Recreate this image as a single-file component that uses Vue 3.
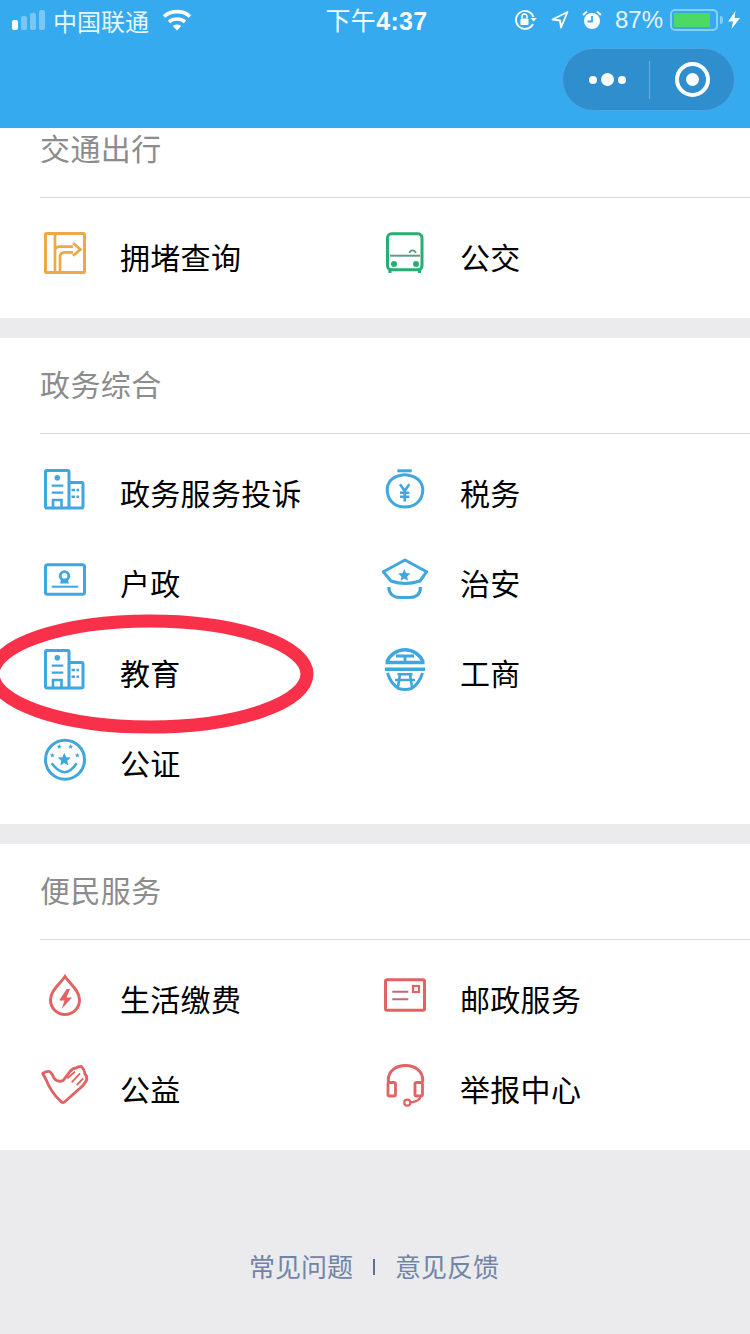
<script setup>
const star = (cx, cy, r) => {
  let pts = [];
  for (let i = 0; i < 10; i++) {
    const rad = i % 2 ? r * 0.45 : r;
    const a = (Math.PI / 5) * i - Math.PI / 2;
    pts.push((cx + rad * Math.cos(a)).toFixed(1) + ',' + (cy + rad * Math.sin(a)).toFixed(1));
  }
  return `<polygon points="${pts.join(' ')}" fill="currentColor" stroke="none"/>`;
};

const building = `
  <path d="M29 40 V3 a1.5 1.5 0 0 0 -1.5 -1.5 H7 A1.5 1.5 0 0 0 5.500 3 V37.500 A1.500 1.500 0 0 0 7 39 H41.500 A1.500 1.500 0 0 0 43 37.500 V15 A1.500 1.500 0 0 0 41.500 13.500 H29"/>
  <circle cx="17.300" cy="8.700" r="2.800" fill="currentColor" stroke="none"/>
  <path d="M11.700 16.700 H23.300 M11.700 23.700 H23.300" stroke-width="2.200"/>
  <path d="M13 39 V31 H21.500 V39" stroke-width="2.600"/>
  <path d="M31.500 21 H39 M31.500 27.700 H39" stroke-width="2.400" stroke-dasharray="3.500 1.500"/>`;

const icons = {
  road: `
    <rect x="5.500" y="0.500" width="39" height="39" rx="1"/>
    <path d="M15 0.500 V40 M15 16 C16 14.500 17.500 13.700 20 13.700 H33 M20 40 V24 C20 21 22 19.300 25 19.300 H33" stroke-width="2.700"/>
    <path d="M33 10 L40.500 16.400 L33 22.800" stroke-width="2.700"/>`,
  bus: `
    <rect x="7.500" y="0.800" width="34.500" height="36" rx="4"/>
    <path d="M10 37 V40 M39.500 37 V40" stroke-width="3"/>
    <path d="M10 22.700 H40" stroke="#5f9c88" stroke-width="2"/>
    <path d="M29.500 20 C30.500 16.500 34.500 16.500 35.800 20" stroke="#5f9c88" stroke-width="1.800"/>
    <circle cx="14" cy="31" r="3" fill="currentColor" stroke="none"/>
    <circle cx="36" cy="31" r="3" fill="currentColor" stroke="none"/>`,
  building,
  id: `
    <rect x="5.500" y="5.800" width="39" height="29.500" rx="2"/>
    <path d="M11.700 27.700 H38.300" stroke-width="2"/>
    <circle cx="24.500" cy="17" r="4.300" stroke-width="2.800"/>
    <path d="M20 24.500 H29 L27.500 19.500 H21.500 Z" fill="currentColor" stroke="none"/>`,
  tax: `
    <path d="M17.300 1.800 H31.700" stroke-width="3"/>
    <path d="M20 6.500 C10 8.500 6 16 7.500 24 C9 33 16 38 24.800 38 C34 38 41 33 42.500 24 C44 16 39.500 8.500 29.500 6.500 Q25 5 20 6.500 Z"/>
    <path d="M20 15.300 L24.700 22 L29.300 15.300 M24.700 22 V32.500 M20 23.700 H29.300 M20 27.800 H29.300" stroke-width="2.600"/>`,
  cap: `
    <path d="M3.300 12.700 L25 1 L46.700 12.700 L40 22 Q25 27 11 22 Z" stroke-linejoin="round"/>
    <path d="M8.800 28 C9 36 15 38.500 20 38.500 H30 C35 38.500 40.500 36 40.500 28" stroke-width="3.200"/>
    ${star(24.300, 16.500, 6.500)}`,
  gov: `
    <path d="M7 12.700 A19.500 19.500 0 0 1 43 12.700" stroke-width="3.400"/>
    <path d="M16 7 H34 M25 7 V13" stroke-width="2.800"/>
    <path d="M5.500 13.500 H44.500 M5 20.300 H45" stroke-width="3.400"/>
    <path d="M7.500 24 C9.500 30.500 13 36 18.500 39.500 Q25 41.500 31.500 39.500 C37 36 40.500 30.500 42.500 24" stroke-width="3"/>
    <path d="M17.500 25.300 H32.500 M15 31 H35 M20 25.300 L18 38 M30 25.300 L32 38" stroke-width="2.600"/>`,
  badge: `
    <circle cx="25" cy="20.700" r="19.500"/>
    <path d="M11.700 24.300 Q25 42 36.700 24.300" stroke-width="2.500"/>
    ${star(24.300, 20.800, 7)}
    ${star(19.300, 7.700, 2.600)}
    ${star(30.700, 7.700, 2.600)}
    ${star(12.300, 16.300, 2.600)}
    ${star(37.300, 16.300, 2.600)}`,
  drop: `
    <path d="M25 1.500 C20 9 10.500 15.500 10.500 25 A14.500 14.500 0 0 0 39.500 25 C39.500 15.500 30 9 25 1.500 Z"/>
    <polygon points="26.700,14 19,25.500 24.500,25.500 21.700,34 32,22.500 26.500,22.500 30,14" fill="currentColor" stroke="none"/>`,
  hands: `
    <path d="M2.700 8.500 Q7 5.500 10 6.700 Q12.500 9 14 13 Q17 17.500 23 15.700 L30 6.500 Q33 3 36 3 Q39 1 41.700 1.700 Q44.500 4.500 45 9 Q47.500 12 46.700 15 Q44 20 40 23.300 L24.500 37 Q22.500 38.500 20 35.500 Q15 31 12 26 Q8 20 6.500 15.500 Z" stroke-linejoin="round" stroke-width="2.800"/>
    <path d="M27.300 13.300 L35 6.700 M31.700 17.300 L40 8.300 M36.700 20 L43.300 13.300" stroke-width="1.800"/>`,
  mail: `
    <rect x="5.500" y="4.800" width="39" height="30.500" rx="1.500"/>
    <path d="M12.300 16.700 H28.300 M12.300 24.300 H28.300" stroke="#b5706f" stroke-width="2"/>
    <rect x="33" y="11" width="6" height="6" stroke-width="2.200"/>`,
  headset: `
    <path d="M8.300 17 V15 C8.300 6 16 0.500 25.500 0.500 C35 0.500 42.700 6 42.700 15 V17"/>
    <rect x="8" y="17.500" width="7.500" height="13.500" rx="1.500" stroke-width="2.800"/>
    <rect x="35" y="17.500" width="7.500" height="13.500" rx="1.500" stroke-width="2.800"/>
    <path d="M40.500 31 Q40.500 36 31 37.300" stroke-width="2.200"/>
    <circle cx="27.300" cy="37.700" r="3" stroke-width="2.200"/>`
};

const sections = [
  {
    title: '交通出行',
    items: [
      { name: '拥堵查询', icon: 'road', color: '#eea84c' },
      { name: '公交', icon: 'bus', color: '#27ae72' }
    ]
  },
  {
    title: '政务综合',
    items: [
      { name: '政务服务投诉', icon: 'building', color: '#40a6de' },
      { name: '税务', icon: 'tax', color: '#40a6de' },
      { name: '户政', icon: 'id', color: '#40a6de' },
      { name: '治安', icon: 'cap', color: '#40a6de' },
      { name: '教育', icon: 'building', color: '#40a6de' },
      { name: '工商', icon: 'gov', color: '#40a6de' },
      { name: '公证', icon: 'badge', color: '#40a6de' }
    ]
  },
  {
    title: '便民服务',
    items: [
      { name: '生活缴费', icon: 'drop', color: '#e26363' },
      { name: '邮政服务', icon: 'mail', color: '#e26363' },
      { name: '公益', icon: 'hands', color: '#e26363' },
      { name: '举报中心', icon: 'headset', color: '#e26363' }
    ]
  }
];
</script>

<template>
  <div class="page">
    <header class="nav">
      <div class="status">
        <div class="status-left">
          <svg class="signal" width="34" height="20" viewBox="0 0 34 20">
            <rect x="0" y="10" width="6" height="10" rx="2" fill="#fff" />
            <rect x="9" y="6" width="6" height="14" rx="2" fill="#fff" opacity=".35" />
            <rect x="18" y="3" width="6" height="17" rx="2" fill="#fff" opacity=".35" />
            <rect x="27" y="0" width="6" height="20" rx="2" fill="#fff" opacity=".35" />
          </svg>
          <span class="carrier">中国联通</span>
          <svg class="wifi" width="30" height="22" viewBox="0 0 30 22" fill="none" stroke="#fff" stroke-width="3.600">
            <path d="M2 7.500 C9 1 21 1 28 7.500" />
            <path d="M7 12.800 C11.500 9 18.500 9 23 12.800" />
            <path d="M15 21.500 L10.800 17 C13 15 17 15 19.200 17 Z" fill="#fff" stroke="none" />
          </svg>
        </div>
        <div class="time"><span class="time-cn">下午</span>4:37</div>
        <div class="status-right">
          <svg width="24" height="22" viewBox="0 0 24 22" fill="none" stroke="#fff" stroke-width="1.800">
            <path d="M19.500 8 A9 9 0 1 0 19 15" />
            <path d="M23 9 L19.500 12.500 L16.500 9" fill="#fff" stroke="none" />
            <rect x="6.500" y="9.500" width="8" height="6.500" rx="1" fill="#fff" stroke="none" />
            <path d="M8 9.500 V7.500 A2.500 2.500 0 0 1 13 7.500 V9.500" stroke-width="1.500" />
          </svg>
          <svg class="arrow" width="18" height="18" viewBox="0 0 18 18" fill="none" stroke="#fff" stroke-width="1.800" stroke-linejoin="round">
            <path d="M16.500 1 L1.500 8.500 L9 9.500 L10 16.500 Z" />
          </svg>
          <svg class="alarm" width="20" height="20" viewBox="0 0 20 20">
            <circle cx="10" cy="11" r="8" fill="#fff" />
            <path d="M10 6 V11.500 H5.500" fill="none" stroke="#35aaee" stroke-width="1.800" />
            <path d="M1 5 L5 1.500 M19 5 L15 1.500" stroke="#fff" stroke-width="2" />
          </svg>
          <span class="percent">87%</span>
          <div class="battery"><div class="battery-fill"></div></div>
          <div class="battery-tip"></div>
          <svg class="bolt" width="12" height="18" viewBox="0 0 12 18">
            <polygon points="7.500,0 0,10.500 5,10.500 3.500,18 12,7 6.500,7" fill="#fff" />
          </svg>
        </div>
      </div>
      <div class="capsule">
        <div class="capsule-part dots">
          <i class="dot"></i><i class="dot big"></i><i class="dot"></i>
        </div>
        <div class="capsule-line"></div>
        <div class="capsule-part">
          <div class="target"><i></i></div>
        </div>
      </div>
    </header>

    <main class="list">
      <section v-for="s in sections" :key="s.title" class="block">
        <h2 class="block-title"><span>{{ s.title }}</span></h2>
        <div class="grid">
          <div v-for="item in s.items" :key="item.name" class="item">
            <svg
              class="icon"
              :style="{ color: item.color }"
              viewBox="0 0 50 50"
              width="50"
              height="50"
              v-html="icons[item.icon]"
            ></svg>
            <span class="item-name">{{ item.name }}</span>
          </div>
        </div>
      </section>
      <footer class="foot">
        <span>常见问题</span>
        <i class="foot-sep"></i>
        <span>意见反馈</span>
      </footer>
    </main>

    <svg class="mark" width="340" height="130" viewBox="0 0 340 130">
      <ellipse cx="170" cy="65" rx="157" ry="53" fill="none" stroke="#f9304a" stroke-width="13" />
    </svg>
  </div>
</template>

<style>
html,
body {
  margin: 0;
  background: #ebebed;
}
</style>

<style scoped>
.page {
  position: relative;
  width: 750px;
  height: 1334px;
  overflow: hidden;
  background: #ebebed;
  font-family: "Liberation Sans", "Noto Sans CJK SC", sans-serif;
}

.nav {
  position: relative;
  z-index: 2;
  height: 128px;
  background: #35aaee;
  color: #fff;
}

.status {
  display: grid;
  grid-template-columns: 1fr auto 1fr;
  align-items: center;
  height: 40px;
}

.status-left {
  display: flex;
  align-items: center;
  padding-left: 12px;
}

.carrier {
  margin-left: 7px;
  font-size: 24px;
  color: #e6f5ff;
  font-family: "Noto Sans CJK SC", sans-serif;
  font-weight: 400;
}

.wifi {
  margin-left: 13px;
}

.time {
  margin: 0 0 2px 3px;
  font-size: 25px;
  font-weight: 700;
  letter-spacing: 0.3px;
  color: #f2faff;
  font-family: "Liberation Sans", sans-serif;
}

.time-cn {
  font-family: "Noto Sans CJK SC", sans-serif;
  font-weight: 400;
}

.status-right {
  display: flex;
  align-items: center;
  justify-content: flex-end;
  padding-right: 10px;
}

.arrow {
  margin-left: 13px;
}

.alarm {
  margin-left: 13px;
}

.percent {
  margin-left: 13px;
  font-size: 24px;
  color: #e6f5ff;
}

.battery {
  box-sizing: border-box;
  width: 48px;
  height: 22px;
  margin-left: 7px;
  padding: 2px;
  border: 2px solid #86cff5;
  border-radius: 5px;
}

.battery-fill {
  width: 36px;
  height: 100%;
  background: #4cd964;
}

.battery-tip {
  width: 3px;
  height: 8px;
  margin-left: 2px;
  background: #86cff5;
  border-radius: 0 3px 3px 0;
}

.bolt {
  margin-left: 5px;
}

.capsule {
  display: flex;
  align-items: center;
  box-sizing: border-box;
  width: 173px;
  height: 63px;
  margin: 8px 15px 0 auto;
  background: #2f8fce;
  border: 1px solid #4ba6e2;
  border-radius: 32px;
}

.capsule-part {
  flex: 1;
  display: flex;
  align-items: center;
  justify-content: center;
  gap: 4px;
}

.capsule-part.dots {
  padding-left: 2px;
}

.capsule-line {
  width: 1px;
  height: 38px;
  background: rgba(255, 255, 255, 0.25);
}

.dot {
  display: block;
  width: 8px;
  height: 8px;
  border-radius: 50%;
  background: #fff;
}

.dot.big {
  width: 13px;
  height: 13px;
}

.target {
  display: flex;
  align-items: center;
  justify-content: center;
  box-sizing: border-box;
  width: 35px;
  height: 35px;
  border: 4px solid #fff;
  border-radius: 50%;
}

.target i {
  display: block;
  width: 13px;
  height: 13px;
  border-radius: 50%;
  background: #fff;
}

.list {
  margin-top: -26px;
}

.block {
  margin-bottom: 20px;
  background: #fff;
}

.block-title {
  display: flex;
  align-items: center;
  box-sizing: border-box;
  height: 96px;
  margin: 0 0 0 40px;
  padding-bottom: 5px;
  border-bottom: 1px solid #d9d9d9;
  font-size: 30px;
  font-weight: 400;
  letter-spacing: 0.4px;
  color: #8c8c8c;
  font-family: "Noto Sans CJK SC", sans-serif;
}

.grid {
  display: grid;
  grid-template-columns: 340px 340px;
  padding: 15px 0 15px 40px;
}

.item {
  display: flex;
  align-items: center;
  height: 90px;
}

.icon {
  flex: none;
  overflow: visible;
  fill: none;
  stroke: currentColor;
  stroke-width: 3;
}

.item-name {
  margin: 0 0 4px 30px;
  font-size: 30px;
  font-weight: 400;
  letter-spacing: 0.3px;
  color: #000;
  font-family: "Noto Sans CJK SC", sans-serif;
}

.foot {
  display: flex;
  justify-content: center;
  align-items: center;
  gap: 20px;
  padding: 77px 2px 0 0;
  font-size: 26px;
  font-weight: 400;
  color: #7084a8;
  font-family: "Noto Sans CJK SC", sans-serif;
}

.foot-sep {
  width: 2px;
  height: 16px;
  margin-top: 2px;
  background: #5c6f92;
}

.mark {
  position: absolute;
  left: -20px;
  top: 609px;
  z-index: 1;
}
</style>
